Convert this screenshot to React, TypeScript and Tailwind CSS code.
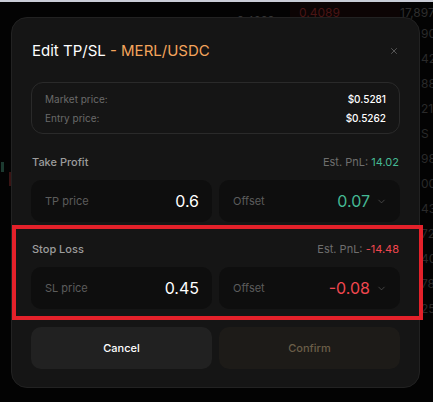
import { ChevronDown, X } from 'lucide-react';

interface FieldProps {
  label: string;
  value: string;
  valueClass: string;
  chevron?: boolean;
}

function Field({ label, value, valueClass, chevron }: FieldProps) {
  return (
    <div className="flex h-[42px] flex-1 items-center justify-between rounded-[10px] bg-[#0e0e0e] pl-[14px] pr-[13px]">
      <span className="text-[11px] text-[#5c5c5c]">{label}</span>
      <div className="flex items-center gap-[6px]">
        <span className={`text-[16px] leading-none ${valueClass}`}>{value}</span>
        {chevron && <ChevronDown size={11} strokeWidth={1.5} className="text-[#5a5a5a]" />}
      </div>
    </div>
  );
}

function Section({ title, pnl, pnlClass, label, price, offset, offsetClass }: {
  title: string;
  pnl: string;
  pnlClass: string;
  label: string;
  price: string;
  offset: string;
  offsetClass: string;
}) {
  return (
    <div className="flex flex-col gap-[10px]">
      <div className="flex h-[16px] items-center justify-between px-[1px] text-[11px]">
        <span className="font-medium text-[#9c9c9c]">{title}</span>
        <span className="text-[#6e6e6e]">
          Est. PnL: <span className={pnlClass}>{pnl}</span>
        </span>
      </div>
      <div className="flex gap-[7px]">
        <Field label={label} value={price} valueClass="text-white" />
        <Field label="Offset" value={offset} valueClass={offsetClass} chevron />
      </div>
    </div>
  );
}

export default function App() {
  return (
    <div
      className="relative h-[402px] w-[433px] overflow-hidden bg-[#030303] pt-[17px] pl-[11px]"
      style={{ fontFamily: 'Inter, "Noto Sans", sans-serif' }}
    >
      {/* backdrop: page behind the dialog */}
      <div className="absolute left-0 right-0 top-0 h-[2px] bg-[#c9ccd6]" />
      <div className="absolute left-[290px] top-[2px] h-[18px] w-[110px] bg-[#0c0404]" />
      <span className="absolute left-[299px] top-[4px] text-[12px] text-[#4a1515]">0.4089</span>
      <span className="absolute left-[400px] top-[4px] text-[12px] text-[#2e2e2e]">17,897</span>
      <span className="absolute left-[237px] top-[12px] text-[11px] text-[#333]">0.4200</span>
      <div className="absolute left-[421px] top-[26px] flex flex-col gap-[9px] text-[12px] leading-[16px] text-[#2a2a2a]">
        {['90', '42', '88', '21', 'S', '98', '00', '43', '72', '40', '78', '25'].map((t, i) => (
          <span key={i}>{t}</span>
        ))}
      </div>
      <div className="absolute left-[1px] top-[162px] h-[10px] w-[3px] bg-[#1c3a30]" />
      <div className="absolute left-[9px] top-[172px] h-[14px] w-[2px] bg-[#3a1414]" />

      {/* dialog */}
      <div className="relative flex h-[371px] w-[409px] flex-col rounded-[16px] border border-[#222] bg-[#151515] px-[19px] pt-[23px]">
        <div className="flex h-[20px] items-center justify-between pl-[1px]">
          <h2 className="text-[15px] font-normal text-white">
            Edit TP/SL <span className="text-[#f4a45c]">- MERL/USDC</span>
          </h2>
          <X size={10} strokeWidth={1.6} className="mr-[1px] text-[#777]" />
        </div>

        <div className="mt-[21px] flex flex-col gap-[3px] rounded-[12px] border border-[#2a2a2a] px-[13px] pt-[8px] pb-[7px] text-[10px] leading-[16px]">
          <div className="flex justify-between">
            <span className="text-[#6a6a6a]">Market price:</span>
            <span className="font-medium text-white">$0.5281</span>
          </div>
          <div className="flex justify-between">
            <span className="text-[#6a6a6a]">Entry price:</span>
            <span className="font-medium text-white">$0.5262</span>
          </div>
        </div>

        <div className="mt-[20px]">
          <Section
            title="Take Profit"
            pnl="14.02"
            pnlClass="text-[#45b994]"
            label="TP price"
            price="0.6"
            offset="0.07"
            offsetClass="text-[#45b994]"
          />
        </div>

        <div className="mt-[19px]">
          <Section
            title="Stop Loss"
            pnl="-14.48"
            pnlClass="text-[#f0474f]"
            label="SL price"
            price="0.45"
            offset="-0.08"
            offsetClass="text-[#f0474f]"
          />
        </div>

        <div className="mt-[18px] flex gap-[7px]">
          <button className="h-[42px] flex-1 rounded-[10px] bg-[#212121] text-[11px] font-medium text-white">
            Cancel
          </button>
          <button className="h-[42px] flex-1 rounded-[10px] bg-[#1d1b18] text-[11px] font-medium text-[#6b5e48]">
            Confirm
          </button>
        </div>
      </div>

      {/* annotation highlight */}
      <div className="pointer-events-none absolute left-[12px] top-[225px] h-[95px] w-[411px] border-[4px] border-[#e4212a]" />
    </div>
  );
}
